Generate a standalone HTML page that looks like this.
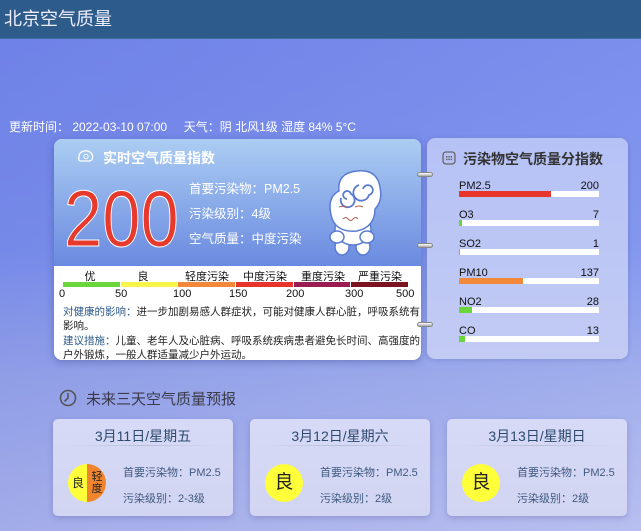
<!DOCTYPE html>
<html><head><meta charset="utf-8"><style>
*{margin:0;padding:0;box-sizing:border-box}
body{width:641px;height:531px;overflow:hidden;position:relative;font-family:"Liberation Sans","Noto Sans CJK SC",sans-serif;background:linear-gradient(180deg,#7486ea 0px,#7e92ec 250px,#a2aeea 380px,#bcc1ee 531px)}
.bgx{position:absolute;left:0;top:39px;width:641px;height:492px;background:linear-gradient(90deg,rgba(90,110,220,.25),rgba(160,180,250,.15))}
.hdr{position:absolute;left:0;top:0;width:641px;height:39px;background:#2d5b8a;color:#eef;font-size:18px;line-height:39px;padding-left:4px;border-bottom:1px solid #3d6ea0}
.abs{position:absolute;white-space:nowrap}
.info{left:9px;top:118px;font-size:12px;color:#fff}
.main{left:54px;top:139px;width:367px;height:221px;border-radius:8px;overflow:hidden;background:#fff;box-shadow:0 2px 8px rgba(40,50,120,.35)}
.mtop{position:absolute;left:0;top:0;width:367px;height:127px;background:linear-gradient(180deg,#abcdf2,#6a8ae0)}
.right{left:427px;top:138px;width:201px;height:221px;border-radius:8px;background:linear-gradient(180deg,#b6c2f6,#c2cbf4);box-shadow:0 1px 5px rgba(40,50,120,.2)}
.ring{position:absolute;left:417px;width:16px;height:5px;border-radius:3px;background:linear-gradient(#fff,#aaa);border:1px solid #888}
.lab{font-size:11px;color:#111;position:absolute}
.bar{position:absolute;left:459px;width:140px;height:6px;background:#fff}
.fc{position:absolute;top:419px;width:180px;height:97px;border-radius:5px;background:linear-gradient(180deg,#d6daf6,#d2d5f2);box-shadow:0 2px 6px rgba(60,60,130,.25)}
.fc .t{position:absolute;left:0;top:7px;width:180px;text-align:center;font-size:14px;color:#2d4a6e}
.fc .ln{position:absolute;left:15px;top:26px;width:150px;height:1px;background:linear-gradient(90deg,transparent,#b8bcd8,transparent)}
.fc .c{position:absolute;left:15px;top:45px;width:38px;height:38px;border-radius:50%;background:#ffff3a;font-size:19px;text-align:center;line-height:38px;color:#222}
.fc .a{position:absolute;left:70px;font-size:11px;color:#3f5a80}
.tx{position:absolute;left:9px;white-space:nowrap;font-size:10.5px;line-height:14px;color:#222}
</style></head><body>
<div class="bgx"></div>
<div class="hdr">北京空气质量</div>
<div class="abs info">更新时间：&nbsp;2022-03-10 07:00 &nbsp;&nbsp;&nbsp;&nbsp;天气：阴 北风1级 湿度 84% 5°C</div>

<div class="abs main">
 <div class="mtop"></div>
 <svg class="abs" style="left:24px;top:10px" width="16" height="14"><path d="M3 12 Q0 12 1 8 Q1 3 6 2 Q11 1 14 5 Q16 10 12 12 Z" fill="none" stroke="#fff" stroke-width="1.3"/><circle cx="8" cy="7.5" r="2.2" fill="none" stroke="#fff" stroke-width="1"/></svg>
 <div class="abs" style="left:49px;top:9px;font-size:14px;font-weight:bold;color:#fff">实时空气质量指数</div>
 <div class="abs" style="left:10px;top:35px;font-size:80px;line-height:90px;color:#e83a2c;-webkit-text-stroke:1px #fff;transform:scaleX(0.86);transform-origin:0 0">200</div>
 <div class="abs" style="left:135px;top:39px;font-size:12.5px;color:#fff">首要污染物：PM2.5</div>
 <div class="abs" style="left:135px;top:64px;font-size:12.5px;color:#fff">污染级别：4级</div>
 <div class="abs" style="left:135px;top:89px;font-size:12.5px;color:#fff">空气质量：中度污染</div>
 <svg class="abs" style="left:271px;top:28px" width="62" height="92" viewBox="0 0 62 92">
  <g stroke="#5a7cd0" stroke-width="1.5" fill="#fff">
   <ellipse cx="17" cy="80" rx="7" ry="8"/><ellipse cx="38" cy="80" rx="7" ry="8"/>
   <ellipse cx="28" cy="62" rx="18" ry="16"/>
   <path d="M6 48 Q2 30 14 24 Q12 6 32 4 Q52 2 55 20 Q58 34 50 42 Q50 60 32 64 Q10 66 6 48Z"/>
   <ellipse cx="12" cy="70" rx="7" ry="6"/><ellipse cx="42" cy="70" rx="7" ry="6"/>
  </g>
  <g fill="none" stroke="#5a7cd0" stroke-width="1.8"><path d="M38 22 a5 5 0 1 1 6 6 a8 8 0 1 1 -10 -10"/><path d="M22 32 a4 4 0 1 1 4 -5 a7 7 0 1 1 -10 4"/></g>
  <g fill="none" stroke="#b06050" stroke-width="1"><path d="M14 40 q4 -2 8 1"/><path d="M30 40 q4 -2 8 0"/><path d="M18 52 q3 -3 5 0 q3 3 5 0 q3 -3 5 0"/></g>
 </svg>
 <div class="abs" style="left:0;top:129px;width:367px;font-size:11px;color:#111">
  <span class="abs" style="left:3px;width:66px;text-align:center">优</span><span class="abs" style="left:60px;width:58px;text-align:center">良</span><span class="abs" style="left:124px;width:58px;text-align:center">轻度污染</span><span class="abs" style="left:182px;width:58px;text-align:center">中度污染</span><span class="abs" style="left:240px;width:58px;text-align:center">重度污染</span><span class="abs" style="left:297px;width:58px;text-align:center">严重污染</span>
 </div>
 <div class="abs" style="left:9px;top:143px;height:5px;width:345px;display:flex;gap:1px">
  <div style="flex:1;background:#6bd53c"></div><div style="flex:1;background:#fbf54a"></div><div style="flex:1;background:#f2893a"></div><div style="flex:1;background:#e8352c"></div><div style="flex:1;background:#9a1c52"></div><div style="flex:1;background:#7a1420"></div>
 </div>
 <div class="abs" style="left:0;top:149px;width:367px;font-size:11px;color:#111">
  <span class="abs" style="left:5px">0</span><span class="abs" style="left:61px">50</span><span class="abs" style="left:119px">100</span><span class="abs" style="left:175px">150</span><span class="abs" style="left:232px">200</span><span class="abs" style="left:291px">300</span><span class="abs" style="left:342px">500</span>
 </div>
 <div class="tx" style="top:166px"><span style="color:#2d5b8a">对健康的影响：</span>进一步加剧易感人群症状，可能对健康人群心脏，呼吸系统有<br>影响。</div>
 <div class="tx" style="top:195px"><span style="color:#2d5b8a">建议措施：</span>儿童、老年人及心脏病、呼吸系统疾病患者避免长时间、高强度的<br>户外锻炼，一般人群适量减少户外运动。</div>
</div>

<div class="abs right"></div>
<div class="ring" style="top:172px"></div><div class="ring" style="top:243px"></div><div class="ring" style="top:322px"></div>
<svg class="abs" style="left:442px;top:151px" width="14" height="14"><rect x="1" y="1" width="12" height="12" rx="3" fill="none" stroke="#666" stroke-width="1.3"/><g fill="#666"><rect x="4" y="5" width="1.5" height="1.5"/><rect x="6.3" y="5" width="1.5" height="1.5"/><rect x="8.6" y="5" width="1.5" height="1.5"/><rect x="4" y="7.6" width="1.5" height="1.5"/><rect x="6.3" y="7.6" width="1.5" height="1.5"/><rect x="8.6" y="7.6" width="1.5" height="1.5"/></g></svg>
<div class="abs" style="left:463px;top:149px;font-size:14px;font-weight:bold;color:#333">污染物空气质量分指数</div>

<div class="lab" style="left:459px;top:180px">PM2.5</div><div class="lab" style="left:559px;top:180px;width:40px;text-align:right">200</div>
<div class="bar" style="top:191px"><div style="width:66%;height:100%;background:#e8352c"></div></div>
<div class="lab" style="left:459px;top:209px">O3</div><div class="lab" style="left:559px;top:209px;width:40px;text-align:right">7</div>
<div class="bar" style="top:220px"><div style="width:3px;height:100%;background:#6bd53c"></div></div>
<div class="lab" style="left:459px;top:238px">SO2</div><div class="lab" style="left:559px;top:238px;width:40px;text-align:right">1</div>
<div class="bar" style="top:249px"><div style="width:1px;height:100%;background:#6bd53c"></div></div>
<div class="lab" style="left:459px;top:267px">PM10</div><div class="lab" style="left:559px;top:267px;width:40px;text-align:right">137</div>
<div class="bar" style="top:278px"><div style="width:64px;height:100%;background:#f2893a"></div></div>
<div class="lab" style="left:459px;top:296px">NO2</div><div class="lab" style="left:559px;top:296px;width:40px;text-align:right">28</div>
<div class="bar" style="top:307px"><div style="width:13px;height:100%;background:#6bd53c"></div></div>
<div class="lab" style="left:459px;top:325px">CO</div><div class="lab" style="left:559px;top:325px;width:40px;text-align:right">13</div>
<div class="bar" style="top:336px"><div style="width:6px;height:100%;background:#6bd53c"></div></div>

<svg class="abs" style="left:59px;top:389px" width="18" height="18"><circle cx="9" cy="9" r="7.5" fill="none" stroke="#555" stroke-width="1.6"/><path d="M9 4 V9 L5.5 12.5" fill="none" stroke="#555" stroke-width="1.6"/></svg>
<div class="abs" style="left:86px;top:388px;font-size:15px;color:#3a3a4a">未来三天空气质量预报</div>

<div class="fc" style="left:53px"><div class="t">3月11日/星期五</div><div class="ln"></div>
 <div class="c" style="background:linear-gradient(90deg,#ffff3a 50%,#f0852e 50%);font-size:12px;line-height:12px"><span class="abs" style="left:4px;top:13px">良</span><span class="abs" style="left:23px;top:7px;width:12px;white-space:normal;font-size:11px">轻度</span></div>
 <div class="a" style="top:45px">首要污染物：PM2.5</div><div class="a" style="top:71px">污染级别：2-3级</div></div>
<div class="fc" style="left:250px"><div class="t">3月12日/星期六</div><div class="ln"></div><div class="c">良</div>
 <div class="a" style="top:45px">首要污染物：PM2.5</div><div class="a" style="top:71px">污染级别：2级</div></div>
<div class="fc" style="left:447px"><div class="t">3月13日/星期日</div><div class="ln"></div><div class="c">良</div>
 <div class="a" style="top:45px">首要污染物：PM2.5</div><div class="a" style="top:71px">污染级别：2级</div></div>
</body></html>
